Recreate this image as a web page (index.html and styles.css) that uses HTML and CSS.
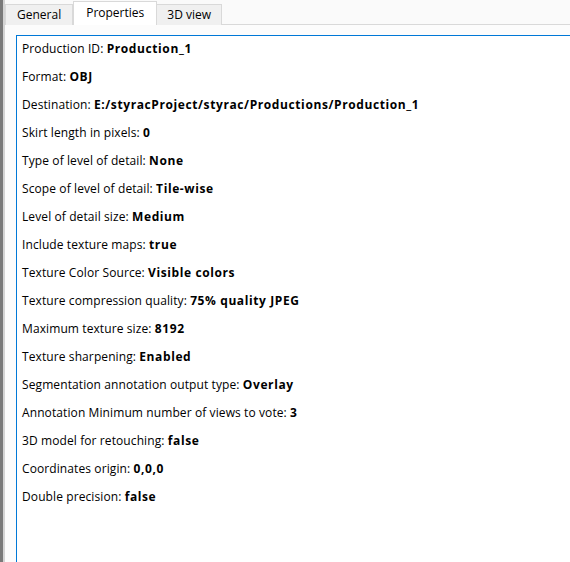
FILE: index.html
```html
<!DOCTYPE html>
<html>
<head>
<meta charset="utf-8">
<link rel="stylesheet" href="styles.css">
</head>
<body>
<div class="window">
  <div class="edge"></div>
  <div class="main">
    <div class="tabbar">
      <div class="tab">General</div>
      <div class="tab active">Properties</div>
      <div class="tab">3D view</div>
    </div>
    <div class="pane">
      <div class="content">
        <div class="row">Production ID: <b>Production_1</b></div>
        <div class="row">Format: <b>OBJ</b></div>
        <div class="row">Destination: <b>E:/styracProject/styrac/Productions/Production_1</b></div>
        <div class="row">Skirt length in pixels: <b>0</b></div>
        <div class="row">Type of level of detail: <b>None</b></div>
        <div class="row">Scope of level of detail: <b>Tile-wise</b></div>
        <div class="row">Level of detail size: <b>Medium</b></div>
        <div class="row">Include texture maps: <b>true</b></div>
        <div class="row">Texture Color Source: <b>Visible colors</b></div>
        <div class="row">Texture compression quality: <b>75% quality JPEG</b></div>
        <div class="row">Maximum texture size: <b>8192</b></div>
        <div class="row">Texture sharpening: <b>Enabled</b></div>
        <div class="row">Segmentation annotation output type: <b>Overlay</b></div>
        <div class="row">Annotation Minimum number of views to vote: <b>3</b></div>
        <div class="row">3D model for retouching: <b>false</b></div>
        <div class="row">Coordinates origin: <b>0,0,0</b></div>
        <div class="row">Double precision: <b>false</b></div>
      </div>
    </div>
  </div>
</div>
</body>
</html>
```
FILE: styles.css
```css
html, body {
  margin: 0;
  padding: 0;
  width: 570px;
  height: 562px;
  overflow: hidden;
  background: #fcfcfc;
  font-family: "Open Sans", "Noto Sans", "DejaVu Sans", sans-serif;
  font-size: 12px;
  color: #000;
}
.window {
  display: flex;
  height: 562px;
}
.edge {
  width: 3px;
  background: #7a7a7a;
  border-right: 2px solid #d4d4d4;
  flex: none;
}
.main {
  flex: 1;
  display: flex;
  flex-direction: column;
  background: #fcfcfc;
}
.tabbar {
  display: flex;
  align-items: flex-end;
  height: 24px;
  border-bottom: 1px solid #d9d9d9;
  background: #fafafa;
}
.tab {
  height: 20px;
  line-height: 20px;
  padding: 0 11px;
  background: #f0f0f0;
  border: 1px solid #d9d9d9;
  border-bottom: none;
  margin-bottom: -1px;
  box-sizing: content-box;
  font-size: 12px;
  color: #000;
}
.tab + .tab {
  border-left: none;
}
.tab:last-child {
  padding: 0 10px;
}
.tab.active {
  background: #ffffff;
  height: 23px;
  line-height: 21px;
  padding: 0 12px;
  border-left: 1px solid #d9d9d9;
  border-right: 1px solid #d9d9d9;
  position: relative;
  z-index: 1;
}
.tab.active + .tab {
  border-left: none;
}
.pane {
  flex: 1;
  padding: 10px 0 0 11px;
  background: #fcfcfc;
}
.content {
  height: 100%;
  background: #ffffff;
  border-top: 1px solid #0078d7;
  border-left: 1px solid #0078d7;
  padding: 4px 0 0 5px;
  box-sizing: border-box;
}
.row {
  height: 28px;
  line-height: 18px;
  white-space: nowrap;
  letter-spacing: 0.1px;
}
.row b {
  font-weight: 700;
  letter-spacing: 0.6px;
}
```
